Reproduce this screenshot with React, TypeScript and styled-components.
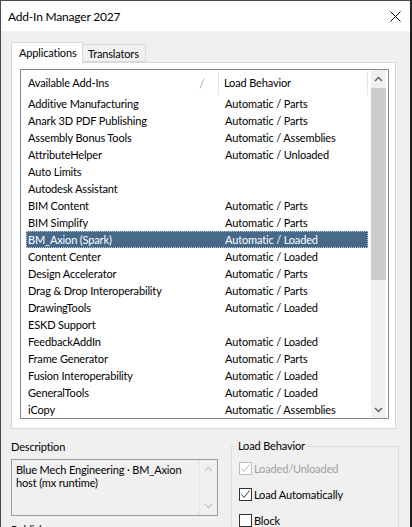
import React from 'react';
import styled, { createGlobalStyle } from 'styled-components';

const GlobalStyle = createGlobalStyle`
  html, body {
    margin: 0;
    padding: 0;
    background: #232323;
  }
  body {
    font-family: Lato, "Liberation Sans", Arial, sans-serif;
    font-size: 11px;
    letter-spacing: -0.15px;
    color: #000;
  }
`;

const Screen = styled.div`
  display: flex;
  width: 412px;
  height: 527px;
  overflow: hidden;
  background: #232323;
`;

const Window = styled.div`
  width: 409px;
  height: 526px;
  flex: none;
  display: flex;
  flex-direction: column;
  border-top: 1px solid #4a4a4a;
  border-left: 1px solid #4a4a4a;
  background: #f0f0f0;
  overflow: hidden;
`;

const TitleBar = styled.div`
  height: 30px;
  flex: none;
  display: flex;
  align-items: center;
  padding-left: 7px;
  background: #fff;
`;

const Title = styled.span`
  font-size: 12px;
  letter-spacing: -0.2px;
  color: #000;
`;

const CloseIcon = styled.svg`
  margin-left: auto;
  margin-right: 9px;
`;

const Body = styled.div`
  flex: 1;
  display: flex;
  flex-direction: column;
  padding: 11px 14px 0 10px;
`;

const TabRow = styled.div`
  display: flex;
  align-items: flex-end;
  height: 20px;
  position: relative;
  z-index: 1;
`;

const Tab = styled.div<{ active?: boolean }>`
  box-sizing: border-box;
  display: flex;
  align-items: center;
  white-space: nowrap;
  background: ${(p) => (p.active ? '#fff' : '#f0f0f0')};
  border: 1px solid #d9d9d9;
  border-bottom: ${(p) => (p.active ? 'none' : '1px solid #d9d9d9')};
  border-left: ${(p) => (p.active ? '1px solid #d9d9d9' : 'none')};
  height: ${(p) => (p.active ? '21px' : '18px')};
  margin-bottom: ${(p) => (p.active ? '-1px' : '0')};
  padding: ${(p) => (p.active ? '0 0 2px 7px' : '0 0 0 5px')};
  width: ${(p) => (p.active ? '72px' : '63px')};
`;

const Panel = styled.div`
  box-sizing: border-box;
  height: 367px;
  border: 1px solid #d9d9d9;
  background: #fff;
  padding: 6px 6px 9px 8px;
`;

const ListView = styled.div`
  box-sizing: border-box;
  height: 350px;
  border: 1px solid #828790;
  background: #fff;
  display: flex;
`;

const ListContent = styled.div`
  flex: 1;
  display: flex;
  flex-direction: column;
`;

const HeaderRow = styled.div`
  height: 25px;
  display: flex;
  align-items: stretch;
`;

const HeaderCell = styled.div<{ w: number; pad: number }>`
  box-sizing: border-box;
  width: ${(p) => p.w}px;
  padding-left: ${(p) => p.pad}px;
  display: flex;
  align-items: center;
  position: relative;
  border-right: 1px solid #e5e5e5;
  margin-top: 2px;
  padding-bottom: 2px;
`;

const SortMark = styled.svg`
  position: absolute;
  left: 178px;
  top: 6px;
`;

const Rows = styled.div`
  margin-left: 5px;
  width: 342px;
`;

const Row = styled.div<{ selected?: boolean }>`
  height: 17px;
  display: flex;
  align-items: center;
  background: ${(p) => (p.selected ? '#476a8b' : 'transparent')};
  color: ${(p) => (p.selected ? '#fff' : '#000')};
  outline: ${(p) => (p.selected ? '1px dotted #b8c8d8' : 'none')};
  outline-offset: -1px;
`;

const Cell = styled.div<{ w?: number }>`
  box-sizing: border-box;
  padding-left: 2px;
  white-space: nowrap;
  ${(p) => (p.w ? `width: ${p.w}px;` : 'flex: 1;')}
`;

const ScrollBar = styled.div`
  width: 15px;
  margin-right: 2px;
  background: #f0f0f0;
  display: flex;
  flex-direction: column;
`;

const ScrollButton = styled.div`
  height: 17px;
  display: flex;
  align-items: center;
  justify-content: center;
`;

const Thumb = styled.div<{ h: number }>`
  height: ${(p) => p.h}px;
  background: #cdcdcd;
  margin-top: 1px;
`;

const Track = styled.div`
  flex: 1;
`;

const Bottom = styled.div`
  display: flex;
  gap: 13px;
`;

const LeftCol = styled.div`
  width: 207px;
  flex: none;
  display: flex;
  flex-direction: column;
`;

const FieldLabel = styled.div`
  margin-top: 10px;
  line-height: 15px;
`;

const DescBox = styled.div`
  box-sizing: border-box;
  margin-top: 5px;
  height: 57px;
  border: 1px solid #9a9a9a;
  background: #f0f0f0;
  display: flex;
`;

const DescText = styled.div`
  flex: 1;
  padding: 3px 0 0 4px;
  line-height: 13px;
  white-space: nowrap;
  color: #000;
`;

const DescScroll = styled.div`
  width: 17px;
  border-left: 1px solid #e3e3e3;
  display: flex;
  flex-direction: column;
  justify-content: space-between;
  align-items: center;
  padding: 6px 0 6px;
`;

const PublisherLabel = styled.div`
  margin-top: 6px;
  line-height: 15px;
`;

const Group = styled.fieldset`
  flex: none;
  width: 168px;
  box-sizing: border-box;
  margin: 10px 0 0;
  padding: 2px 0 0 7px;
  border: 1px solid #dcdcdc;
  border-bottom: none;
`;

const Legend = styled.legend`
  padding: 0 2px;
  margin-left: -3px;
  line-height: 14px;
`;

const CheckRow = styled.label<{ disabled?: boolean }>`
  display: flex;
  align-items: center;
  height: 26px;
  gap: 2px;
  color: ${(p) => (p.disabled ? '#a0a0a0' : '#000')};
`;

const Box = styled.span<{ disabled?: boolean }>`
  box-sizing: border-box;
  width: 13px;
  height: 13px;
  border: 1px solid ${(p) => (p.disabled ? '#bcbcbc' : '#333')};
  background: #fff;
  display: flex;
  align-items: center;
  justify-content: center;
`;

type AddIn = { name: string; load: string; selected?: boolean };

const addIns: AddIn[] = [
  { name: 'Additive Manufacturing', load: 'Automatic / Parts' },
  { name: 'Anark 3D PDF Publishing', load: 'Automatic / Parts' },
  { name: 'Assembly Bonus Tools', load: 'Automatic / Assemblies' },
  { name: 'AttributeHelper', load: 'Automatic / Unloaded' },
  { name: 'Auto Limits', load: '' },
  { name: 'Autodesk Assistant', load: '' },
  { name: 'BIM Content', load: 'Automatic / Parts' },
  { name: 'BIM Simplify', load: 'Automatic / Parts' },
  { name: 'BM_Axion (Spark)', load: 'Automatic / Loaded', selected: true },
  { name: 'Content Center', load: 'Automatic / Loaded' },
  { name: 'Design Accelerator', load: 'Automatic / Parts' },
  { name: 'Drag & Drop Interoperability', load: 'Automatic / Parts' },
  { name: 'DrawingTools', load: 'Automatic / Loaded' },
  { name: 'ESKD Support', load: '' },
  { name: 'FeedbackAddIn', load: 'Automatic / Loaded' },
  { name: 'Frame Generator', load: 'Automatic / Parts' },
  { name: 'Fusion Interoperability', load: 'Automatic / Loaded' },
  { name: 'GeneralTools', load: 'Automatic / Loaded' },
  { name: 'iCopy', load: 'Automatic / Assemblies' },
];

function Chevron({ up, color }: { up?: boolean; color: string }) {
  return (
    <svg width="9" height="6" viewBox="0 0 9 6">
      <polyline
        points={up ? '1,5 4.5,1.5 8,5' : '1,1 4.5,4.5 8,1'}
        fill="none"
        stroke={color}
        strokeWidth="1.4"
      />
    </svg>
  );
}

function Check({ disabled, checked, label }: { disabled?: boolean; checked?: boolean; label: string }) {
  return (
    <CheckRow disabled={disabled}>
      <Box disabled={disabled}>
        {checked && (
          <svg width="11" height="11" viewBox="0 0 11 11">
            <polyline
              points="1.5,5.5 4,8.5 9.5,1.5"
              fill="none"
              stroke={disabled ? '#bcbcbc' : '#333'}
              strokeWidth="1"
            />
          </svg>
        )}
      </Box>
      {label}
    </CheckRow>
  );
}

export default function App() {
  return (
    <Screen>
      <GlobalStyle />
      <Window>
        <TitleBar>
          <Title>Add-In Manager 2027</Title>
          <CloseIcon width="11" height="11" viewBox="0 0 11 11">
            <path d="M0.5 0.5 L10.5 10.5 M10.5 0.5 L0.5 10.5" stroke="#000" strokeWidth="1" />
          </CloseIcon>
        </TitleBar>
        <Body>
          <TabRow>
            <Tab active>Applications</Tab>
            <Tab>Translators</Tab>
          </TabRow>
          <Panel>
            <ListView>
              <ListContent>
                <HeaderRow>
                  <HeaderCell w={198} pad={7}>
                    Available Add-Ins
                    <SortMark width="6" height="11" viewBox="0 0 6 11">
                      <line x1="5" y1="0.5" x2="1" y2="10.5" stroke="#b4b4b4" strokeWidth="1" />
                    </SortMark>
                  </HeaderCell>
                  <HeaderCell w={149} pad={5}>Load Behavior</HeaderCell>
                </HeaderRow>
                <Rows>
                  {addIns.map((a) => (
                    <Row key={a.name} selected={a.selected}>
                      <Cell w={197}>{a.name}</Cell>
                      <Cell>{a.load}</Cell>
                    </Row>
                  ))}
                </Rows>
              </ListContent>
              <ScrollBar>
                <ScrollButton>
                  <Chevron up color="#606060" />
                </ScrollButton>
                <Thumb h={192} />
                <Track />
                <ScrollButton>
                  <Chevron color="#606060" />
                </ScrollButton>
              </ScrollBar>
            </ListView>
          </Panel>
          <Bottom>
            <LeftCol>
              <FieldLabel>Description</FieldLabel>
              <DescBox>
                <DescText>
                  Blue Mech Engineering · BM_Axion
                  <br />
                  host (mx runtime)
                </DescText>
                <DescScroll>
                  <Chevron up color="#c8c8c8" />
                  <Chevron color="#c8c8c8" />
                </DescScroll>
              </DescBox>
              <PublisherLabel>Publisher</PublisherLabel>
            </LeftCol>
            <Group>
              <Legend>Load Behavior</Legend>
              <Check disabled checked label="Loaded/Unloaded" />
              <Check checked label="Load Automatically" />
              <Check label="Block" />
            </Group>
          </Bottom>
        </Body>
      </Window>
    </Screen>
  );
}
